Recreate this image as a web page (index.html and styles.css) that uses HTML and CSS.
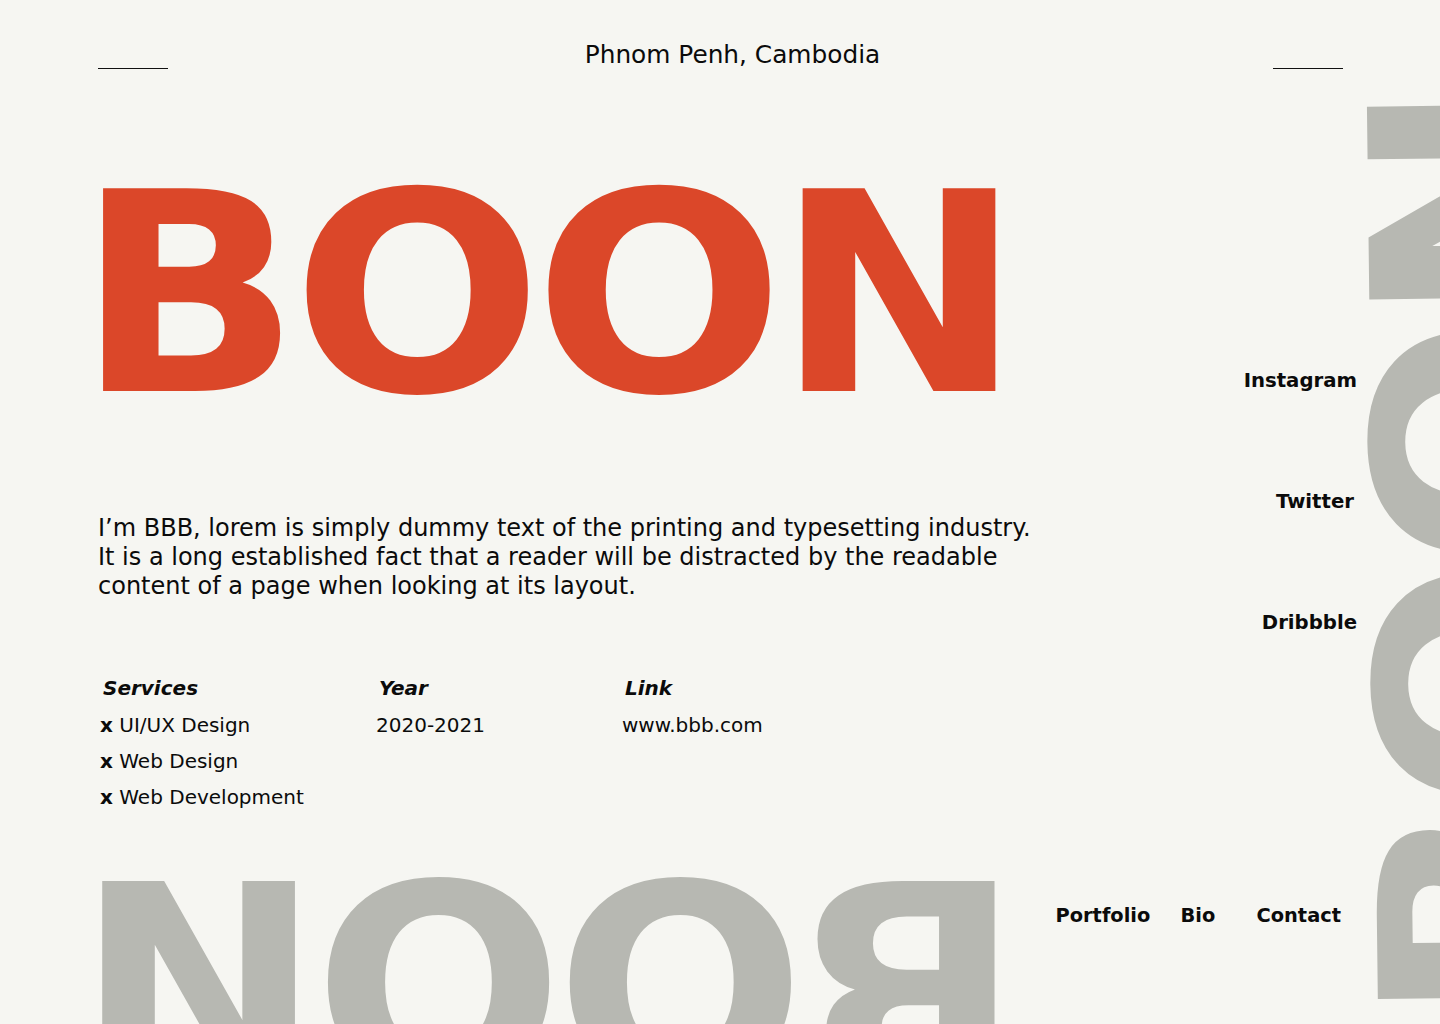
FILE: index.html
```html
<!DOCTYPE html>
<html lang="en">
<head>
<meta charset="utf-8">
<title>BOON</title>
<link rel="stylesheet" href="styles.css">
</head>
<body>
<div class="page">
  <header class="top">
    <span class="rule"></span>
    <p class="city">Phnom Penh, Cambodia</p>
    <span class="rule"></span>
  </header>

  <main class="main">
    <section class="intro">
      <h1 class="hero">BOON</h1>
      <p class="bio">I’m BBB, lorem is simply dummy text of the printing and typesetting industry.<br>It is a long established fact that a reader will be distracted by the readable<br>content of a page when looking at its layout.</p>
      <div class="info">
        <div class="info-col">
          <h2 class="info-title">Services</h2>
          <ul class="info-list">
            <li><b>x</b> UI/UX Design</li>
            <li><b>x</b> Web Design</li>
            <li><b>x</b> Web Development</li>
          </ul>
        </div>
        <div class="info-col">
          <h2 class="info-title">Year</h2>
          <ul class="info-list">
            <li>2020-2021</li>
          </ul>
        </div>
        <div class="info-col">
          <h2 class="info-title">Link</h2>
          <ul class="info-list">
            <li>www.bbb.com</li>
          </ul>
        </div>
      </div>
    </section>

    <nav class="social">
      <a class="social-link social-instagram" href="#">Instagram</a>
      <a class="social-link social-twitter" href="#">Twitter</a>
      <a class="social-link social-dribbble" href="#">Dribbble</a>
    </nav>
  </main>

  <footer class="foot">
    <nav class="menu">
      <a class="menu-link" href="#">Portfolio</a>
      <a class="menu-link" href="#">Bio</a>
      <a class="menu-link" href="#">Contact</a>
    </nav>
  </footer>

  <div class="ghost ghost-bottom" aria-hidden="true">BOON</div>
  <div class="ghost ghost-side" aria-hidden="true">BOON</div>
</div>
</body>
</html>
```

FILE: styles.css
```css
* { box-sizing: border-box; }

html, body {
  margin: 0;
  padding: 0;
  background: #f6f6f2;
}

body {
  font-family: "DejaVu Sans", "Noto Sans", sans-serif;
  color: #0b0b0b;
}

.page {
  position: relative;
  width: 1440px;
  height: 1024px;
  overflow: hidden;
  padding: 0 97px 0 98px;
  background: #f6f6f2;
}

/* header */
.top {
  position: relative;
  z-index: 1;
  display: flex;
  align-items: flex-end;
  justify-content: space-between;
  padding-top: 41px;
}

.rule {
  display: block;
  width: 70px;
  height: 1px;
  background: #111;
}

.city {
  margin: 0 0 0 24px;
  font-size: 24.8px;
  line-height: 28px;
  font-weight: 400;
}

/* main */
.main {
  position: relative;
  z-index: 1;
  display: grid;
  grid-template-columns: 1fr auto;
}

.hero {
  margin: 87px 0 0 -22.5px;
  font-family: "DejaVu Sans", sans-serif;
  font-weight: 700;
  font-size: 278px;
  line-height: 278px;
  letter-spacing: -8.4px;
  color: #db4729;
  white-space: nowrap;
  transform: scaleX(1.061);
  transform-origin: 0 0;
}

.bio {
  margin: 80px 0 0;
  font-size: 24px;
  line-height: 29px;
}

.info {
  display: grid;
  grid-template-columns: 276px 246px auto;
  margin-top: 68px;
  padding-left: 2px;
}

.info-title {
  margin: 0;
  padding-left: 3px;
  font-size: 20px;
  line-height: 38px;
  font-weight: 700;
  font-style: italic;
}

.info-list {
  list-style: none;
  margin: 0;
  padding: 0;
  font-size: 20px;
  line-height: 36px;
}

.info-list b { font-weight: 700; }

.social {
  display: flex;
  flex-direction: column;
  align-items: flex-end;
  gap: 97px;
  padding-top: 300px;
  margin-right: -14px;
}

.social-link,
.menu-link {
  color: #0b0b0b;
  text-decoration: none;
  font-weight: 700;
  line-height: 24px;
}

.social-link { font-size: 19.7px; }
.menu-link { font-size: 19.4px; }

.social-twitter { margin-right: 3px; }

/* footer */
.foot {
  position: relative;
  z-index: 1;
  display: flex;
  justify-content: flex-end;
  padding-top: 89px;
}

.menu {
  display: grid;
  grid-template-columns: 125px 76px auto;
  margin-right: 2px;
}

/* decorative grey words */
.ghost {
  position: absolute;
  z-index: 0;
  font-family: "DejaVu Sans", sans-serif;
  font-weight: 700;
  font-size: 278px;
  line-height: 278px;
  letter-spacing: -8.4px;
  color: #b7b8b2;
  white-space: nowrap;
}

.ghost-bottom {
  left: 111px;
  top: 838px;
  transform: rotate(180deg) scaleX(1.061);
}

.ghost-side {
  left: 1353px;
  top: 967px;
  transform-origin: 25px 32.5px;
  transform: rotate(-90.7deg) scaleX(1.061);
}
```
